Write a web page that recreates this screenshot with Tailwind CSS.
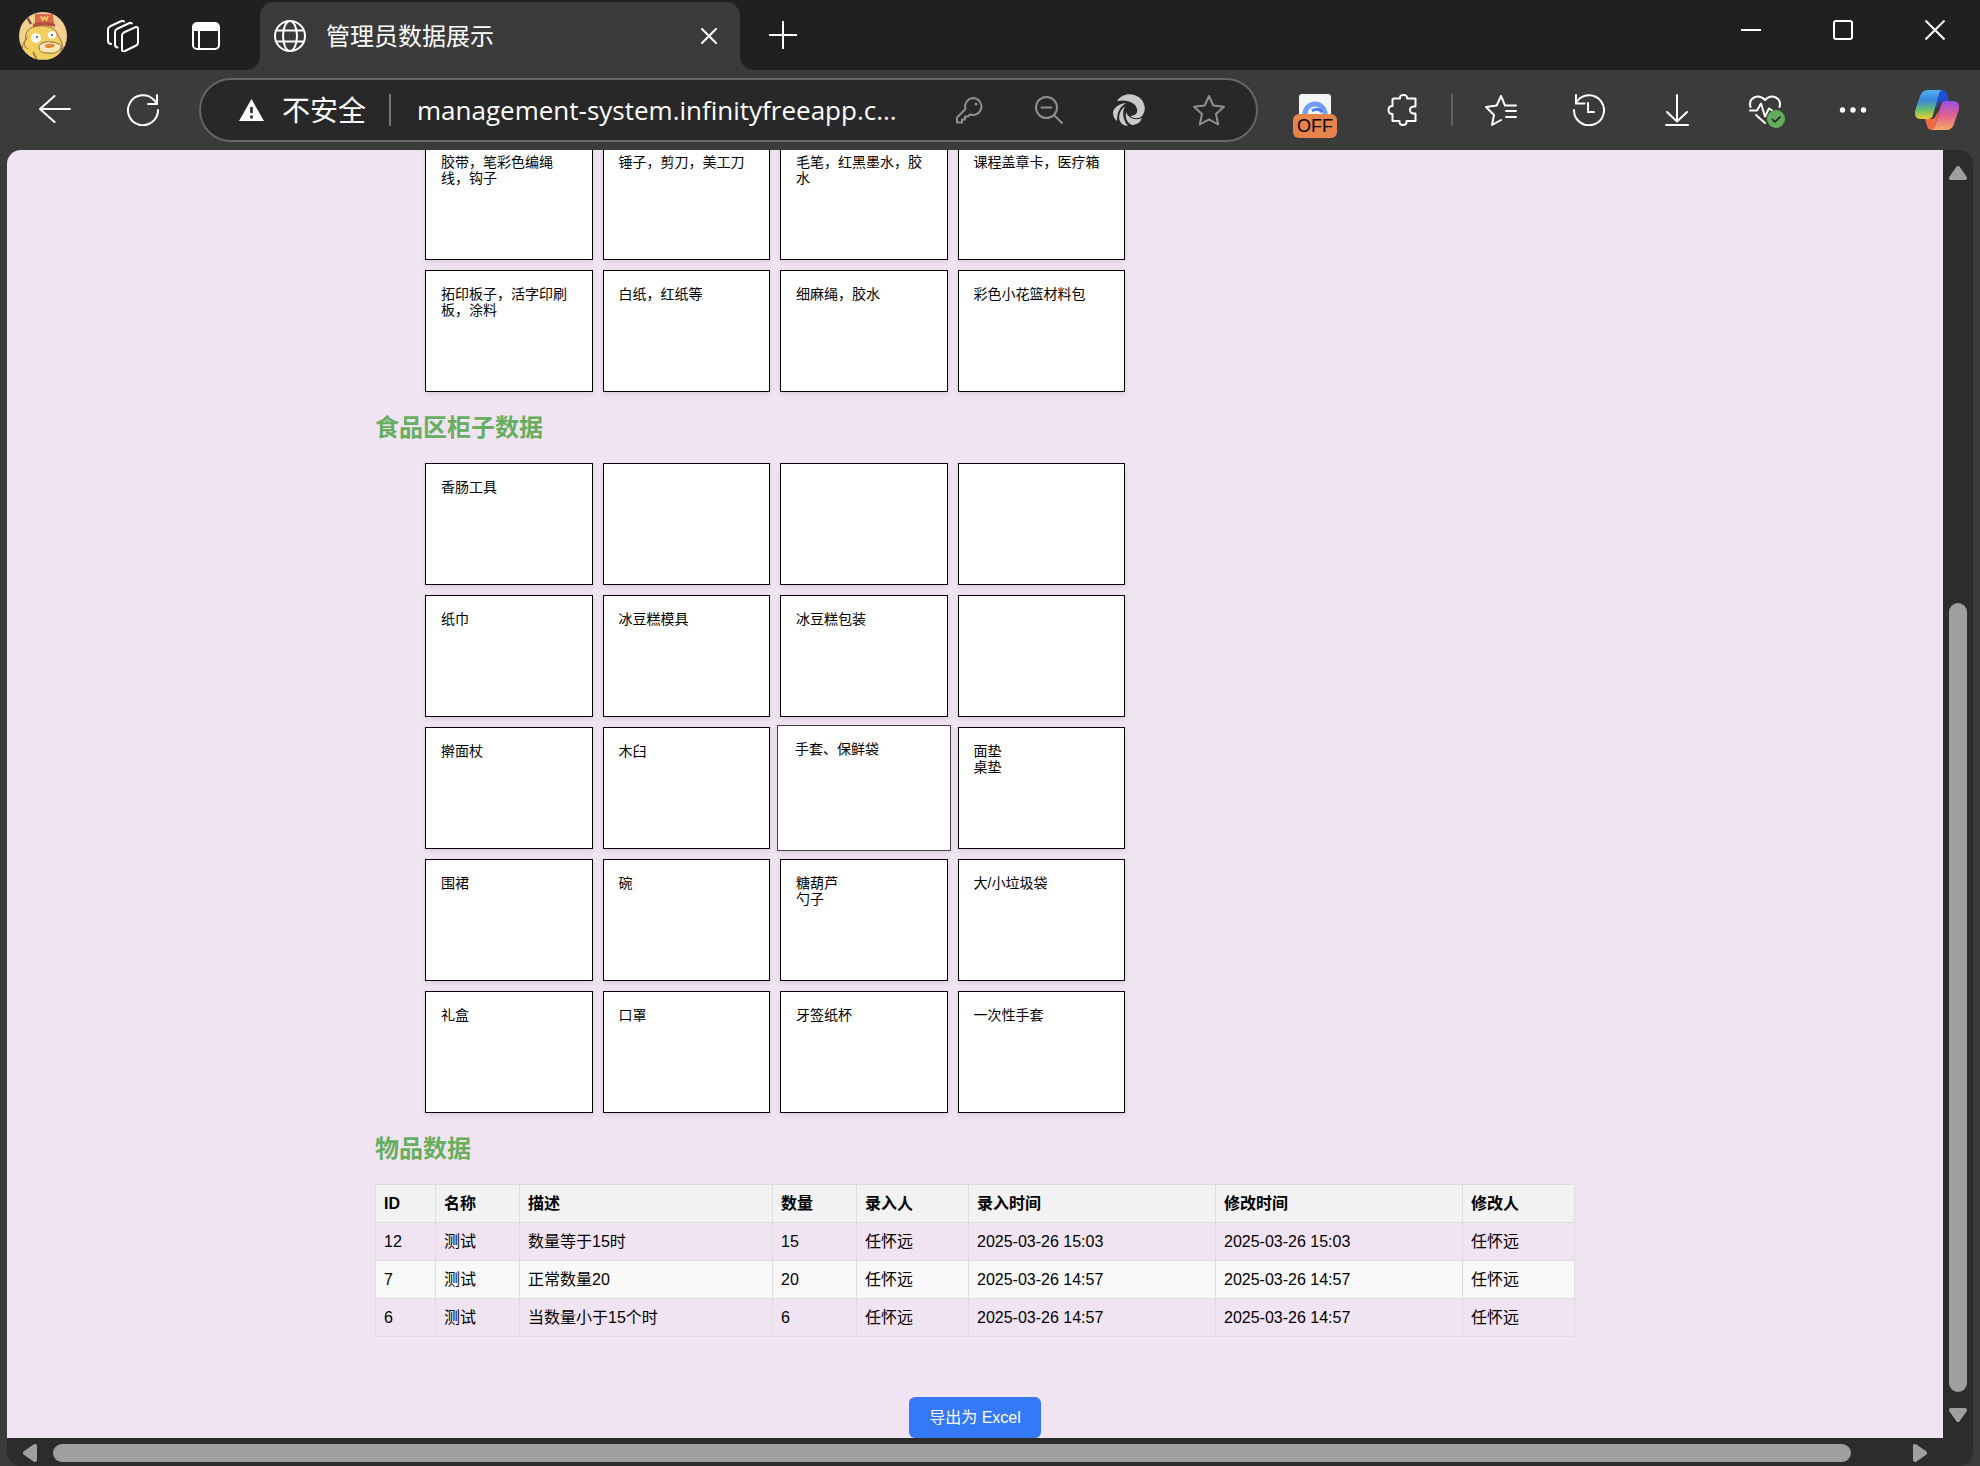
<!DOCTYPE html>
<html lang="zh-CN">
<head>
<meta charset="utf-8">
<meta name="viewport" content="width=device-width, initial-scale=1">
<title>管理员数据展示</title>
<script src="https://cdn.jsdelivr.net/npm/@tailwindcss/browser@4"></script>
</head>
<body class="flex h-screen flex-col overflow-hidden bg-[#3b3b3b] font-['Open_Sans','Noto_Sans_CJK_SC',sans-serif] text-white">

<!-- Title bar -->
<header class="flex h-[70px] shrink-0 items-start bg-[#202020]">
  <div class="flex h-[72px] items-center pl-[19px]">
    <button aria-label="个人资料" class="size-12 overflow-hidden rounded-full">
      <svg viewBox="0 0 48 48" class="size-12">
        <rect width="48" height="48" fill="#f3cf91"/>
        <path d="M6 48c-4-8-4-16 1-20-2-8 4-14 13-14 10-1 18 3 19 10 5 6 6 13 1 18l-6 6z" fill="#f2cf5e" stroke="#8a6d4a" stroke-width="1"/>
        <path d="M9 25c-5 4-5 10 0 12M41 37c4 0 6-3 6-7" fill="none" stroke="#8a6d4a" stroke-width="1"/>
        <path d="M16 2h18l1 10-19 1z" fill="#d9694a"/>
        <path d="M14 12c6-3 16-3 22 0v3c-7-2-15-2-22 0z" fill="#b94f3a"/>
        <path d="m22 4 1.500 4 2-3 2 3 1.500-4" fill="none" stroke="#f6d35b" stroke-width="1.500"/>
        <path d="m8 5 4 7" stroke="#7b5545" stroke-width="2.500"/>
        <circle cx="17" cy="26" r="5" fill="#fff"/><circle cx="33" cy="23" r="4" fill="#fff"/>
        <circle cx="18" cy="25" r="1" fill="#443"/><circle cx="33" cy="23" r="1" fill="#443"/>
        <path d="M20 36c-1-4 5-7 12-6 8 1 11 3 10 6-2 4-8 6-13 5-5 0-8-1-9-5z" fill="#fbe9b5" stroke="#8a6d4a" stroke-width="1"/>
        <path d="M26 33c4-2 8-1 10 0 0 3-8 4-10 2z" fill="#e08c3f"/>
        <path d="m14 40 4 8" stroke="#8a6d4a" stroke-width="1.500"/>
      </svg>
    </button>
    <button aria-label="工作区" class="ml-10">
      <svg viewBox="0 0 32 32" class="size-8" fill="none" stroke="#fff" stroke-width="2" stroke-linejoin="round" stroke-linecap="round">
        <path d="M15 15.500q0-2 1.800-3L28 7.300q3-1.200 3 1.700v13.500q0 2-1.800 3L18 31q-3 1.200-3-1.500z"/>
        <path d="M10.500 27.500Q8 27 8 24.500V12q0-2 1.800-3L22.500 3q1.500-.5 2.300.5"/>
        <path d="M4 24Q1 23.500 1 21V9.500q0-2 1.800-3L14.500 1q1.500-.5 2.500.5"/>
      </svg>
    </button>
    <button aria-label="标签页操作菜单" class="ml-[53px]">
      <svg viewBox="0 0 28 28" class="size-7">
        <rect x="1" y="1" width="26" height="26" rx="4" fill="none" stroke="#fff" stroke-width="2"/>
        <path d="M1 9V5q0-4 4-4h18q4 0 4 4v4z" fill="#fff"/><path d="M7 8v19" stroke="#fff" stroke-width="2"/>
      </svg>
    </button>
  </div>

  <div class="relative mt-0.5 ml-10 flex h-[68px] w-[480px] items-center rounded-t-[14px] bg-[#3b3b3b] pl-3.5">
    <svg viewBox="0 0 14 14" class="absolute bottom-0 -left-3.5 size-3.5"><path d="M14 0v14H0A14 14 0 0 0 14 0z" fill="#3b3b3b"/></svg>
    <svg viewBox="0 0 14 14" class="absolute -right-3.5 bottom-0 size-3.5"><path d="M0 0v14h14A14 14 0 0 1 0 0z" fill="#3b3b3b"/></svg>
    <svg viewBox="0 0 32 32" class="size-8" fill="none" stroke="#fff" stroke-width="2">
      <circle cx="16" cy="16" r="15"/><ellipse cx="16" cy="16" rx="7" ry="15"/><path d="M2.500 10.500h27M2.500 21.500h27"/>
    </svg>
    <span class="ml-5 text-2xl">管理员数据展示</span>
    <button aria-label="关闭标签页" class="mr-[23px] ml-auto">
      <svg viewBox="0 0 16 16" class="size-4" stroke="#fff" stroke-width="2" stroke-linecap="round"><path d="m1 1 14 14M15 1 1 15"/></svg>
    </button>
  </div>
  <button aria-label="新建标签页" class="mt-[21px] ml-[29px]">
    <svg viewBox="0 0 28 28" class="size-7" stroke="#fff" stroke-width="2"><path d="M14 0v28M0 14h28"/></svg>
  </button>
  <div class="ml-auto flex h-15 items-center">
    <button aria-label="最小化" class="flex w-23 justify-center"><svg viewBox="0 0 20 20" class="size-5" stroke="#fff" stroke-width="2"><path d="M0 10h20"/></svg></button>
    <button aria-label="最大化" class="flex w-23 justify-center"><svg viewBox="0 0 20 20" class="size-5" fill="none" stroke="#fff" stroke-width="2"><rect x="1" y="1" width="18" height="18" rx="2"/></svg></button>
    <button aria-label="关闭" class="flex w-[91px] justify-center"><svg viewBox="0 0 20 20" class="size-5" stroke="#fff" stroke-width="2"><path d="m0.500 0.500 19 19M19.500 0.500l-19 19"/></svg></button>
  </div>
</header>

<!-- Toolbar -->
<nav class="flex h-20 shrink-0 items-center pr-[3px] pl-[11px]">
  <button aria-label="返回" class="flex w-22 justify-center">
    <svg viewBox="0 0 32 32" class="size-8" fill="none" stroke="#fff" stroke-width="2" stroke-linecap="round" stroke-linejoin="round"><path d="M31 15H1M15.500 2 1 15l14.500 13"/></svg>
  </button>
  <button aria-label="刷新" class="flex w-22 justify-center">
    <svg viewBox="0 0 32 32" class="size-8" fill="none" stroke="#fff" stroke-width="2" stroke-linecap="round"><path d="M31 16A15 15 0 1 1 27 6l2 2.500M30 1v9h-9"/></svg>
  </button>

  <div class="ml-3 flex h-16 min-w-0 flex-1 items-center rounded-full border-2 border-[#666] bg-[#282828] pr-[7px] pl-[38px]">
    <svg viewBox="0 0 25 22" class="h-[22px] w-[25px] shrink-0"><path d="M12.500 0 25 22H0z" fill="#fff"/><path d="M12.500 8v6M12.500 16.500v3" stroke="#282828" stroke-width="2.600"/></svg>
    <label for="address" class="ml-[18px] shrink-0 text-[28px]">不安全</label>
    <span class="ml-[23px] h-8 w-0.5 shrink-0 bg-[#777]"></span>
    <input id="address" type="text" value="management-system.infinityfreeapp.c..." class="ml-[26px] min-w-0 flex-1 bg-transparent text-[26px] outline-none">
    <button aria-label="密码" class="flex w-20 shrink-0 justify-center">
      <svg viewBox="0 0 28 28" class="size-7" fill="none" stroke="#8f8f8f" stroke-width="2" stroke-linejoin="round"><path d="M18 2a8.500 8.500 0 1 1-3 16.500l-2 2h-3v3H7v3H2v-5L10.500 13A8.500 8.500 0 0 1 18 2z"/><circle cx="21" cy="8" r="1.500" fill="#8f8f8f" stroke="none"/></svg>
    </button>
    <button aria-label="缩小" class="flex w-20 shrink-0 justify-center">
      <svg viewBox="0 0 28 28" class="size-7" fill="none" stroke="#8f8f8f" stroke-width="2" stroke-linecap="round"><circle cx="11.500" cy="11.500" r="10.500"/><path d="M6.500 11.500h10M19 19l8 8"/></svg>
    </button>
    <button aria-label="网页助手" class="flex w-20 shrink-0 justify-center">
      <svg viewBox="0 0 32 32" class="size-8" fill="#c9c9c9">
        <path d="M4 7C9-1 20-2 27 4c6 6 6 13 2 18-3 3-8 3-12 0 5 0 8-3 7-7-1-6-9-10-20-8z"/>
        <path d="M13 9C5 10 1 14 0 18c0 4 1 7 4 9 0-7 2-14 9-18z" />
        <path d="M12 12c-6 5-8 13-3 18 2 1 4 2 6 2-4-5-7-12-3-20z"/>
        <path d="M13 18c2 6 9 9 16 6-2 5-6 7-10 7-5-2-7-7-6-13z"/>
      </svg>
    </button>
    <button aria-label="收藏此页" class="flex w-20 shrink-0 justify-center">
      <svg viewBox="0 0 32 32" class="size-8" fill="none" stroke="#8f8f8f" stroke-width="2" stroke-linejoin="round"><path d="m16 2 4.300 9.500L31 12.700l-8 7.300 2.200 10.500L16 25.300l-9.200 5.200L9 20l-8-7.300 10.700-1.200z"/></svg>
    </button>
  </div>

  <div class="ml-[13px] flex shrink-0 items-center">
    <button aria-label="扩展程序" class="relative flex w-22 justify-center">
      <svg viewBox="0 0 32 32" class="size-8"><rect width="32" height="32" rx="3" fill="#f4f5f8"/><path d="M6 20a10 10 0 0 1 20 0" fill="none" stroke="#6f9df5" stroke-width="5"/><path d="M13 17q6-4 10 1" fill="none" stroke="#4b7cf0" stroke-width="3"/></svg>
      <span class="absolute top-5 left-[22px] flex h-6 w-11 items-center justify-center rounded-md bg-[#e8834b] font-['Liberation_Sans',sans-serif] text-lg text-black">OFF</span>
    </button>
    <button aria-label="扩展" class="flex w-22 justify-center">
      <svg viewBox="0 0 32 32" class="size-8" fill="none" stroke="#fff" stroke-width="2" stroke-linejoin="round"><path d="M7 4.500h6q-.5-3.500 3.500-3.500t3.500 3.500h8.500v8q-5.500-.5-5.500 3.500t5.500 3.500v7.500h-9q.5 4-3.500 4t-3.500-4h-7v-7q-4 0-4-4t4-4V6q0-1.500 1.500-1.500z"/></svg>
    </button>
    <span class="mx-1 h-8 w-0.5 bg-[#606060]"></span>
    <button aria-label="收藏夹" class="flex w-22 justify-center">
      <svg viewBox="0 0 32 32" class="size-8" fill="none" stroke="#fff" stroke-width="2" stroke-linejoin="round" stroke-linecap="round"><path d="M31 11.500H20L16 2l-4.300 9.500L1 13l8 8-2 10 9-5M21 17h10M21 23h10"/></svg>
    </button>
    <button aria-label="历史记录" class="flex w-22 justify-center">
      <svg viewBox="0 0 32 32" class="size-8" fill="none" stroke="#fff" stroke-width="2" stroke-linecap="round"><path d="M1 16A15 15 0 1 0 3.500 8M3 1v8.500h8.500M15 9v9h6"/></svg>
    </button>
    <button aria-label="下载" class="flex w-22 justify-center">
      <svg viewBox="0 0 32 32" class="size-8" fill="none" stroke="#fff" stroke-width="2" stroke-linecap="round" stroke-linejoin="round"><path d="M16 1v26M6 18l10 9.500L26 18M5 31h22"/></svg>
    </button>
    <button aria-label="浏览器概要" class="relative flex w-22 justify-center">
      <svg viewBox="0 0 32 32" class="size-8" fill="none" stroke="#fff" stroke-width="2" stroke-linecap="round" stroke-linejoin="round"><path d="M1.500 13C-1 4 9-1 16 6c7-7 17-2 14.500 7M1 16.500h7l4-7 4 13 4-8 3 2M7 21l9 8"/></svg>
      <svg viewBox="0 0 18 18" class="absolute top-4 left-[46px] size-[18px]"><circle cx="9" cy="9" r="9" fill="#62ad59"/><path d="m5 9 3 3 5.500-5.500" fill="none" stroke="#303030" stroke-width="1.800"/></svg>
    </button>
    <button aria-label="设置及其他" class="flex w-22 justify-center">
      <svg viewBox="0 0 32 32" class="size-8" fill="#fff"><circle cx="5.500" cy="16" r="2.700"/><circle cx="16" cy="16" r="2.700"/><circle cx="26.500" cy="16" r="2.700"/></svg>
    </button>
    <button aria-label="Copilot" class="flex w-20 justify-center">
      <svg viewBox="0 0 44 40" class="h-10 w-11">
        <defs>
          <linearGradient id="cool" x1="0" y1="0" x2="0" y2="1"><stop offset="0" stop-color="#4fb3f4"/><stop offset=".35" stop-color="#3c86e0"/><stop offset=".7" stop-color="#6cc06c"/><stop offset="1" stop-color="#f3cc35"/></linearGradient>
          <linearGradient id="warm" x1="0" y1="0" x2="0" y2="1"><stop offset="0" stop-color="#9a50e8"/><stop offset=".5" stop-color="#e2608f"/><stop offset="1" stop-color="#f7a968"/></linearGradient>
        </defs>
        <path d="M25 0h2q4 0 5 4l2 7h-6q-4 0-5 4l-3 5z" fill="#1f4fd0"/>
        <path d="M19 40h-2q-4 0-5-4l-2-7h6q4 0 5-4l3-5z" fill="#ee6a45"/>
        <path d="M13 0h15q-3 0-4 4l-6 21q-1 4-5 4H6q-7 0-6-8L5 6q2-6 8-6z" fill="url(#cool)"/>
        <path d="M31 40H16q3 0 4-4l6-21q1-4 5-4h7q7 0 6 8l-5 15q-2 6-8 6z" fill="url(#warm)"/>
      </svg>
    </button>
  </div>
</nav>

<!-- Page viewport with its scrollbars -->
<div class="mr-[7px] ml-[7px] flex min-h-0 flex-1 flex-col overflow-hidden rounded-[14px] bg-[#2c2c2c]">
  <div class="flex min-h-0 flex-1">
    <main class="min-w-0 flex-1 overflow-hidden bg-[#f0e4f2] font-['Liberation_Sans','Noto_Sans_CJK_SC',sans-serif] text-black">
      <div class="mx-auto max-w-[1200px]">
        <section class="-mt-3 ml-[50px] grid w-[700px] grid-cols-4 gap-2.5 text-sm leading-4">
          <div class="h-[122px] border border-black bg-white p-[15px] shadow-[0_2px_5px_rgba(0,0,0,0.1)]">胶带，笔彩色编绳线，钩子</div>
          <div class="h-[122px] border border-black bg-white p-[15px] shadow-[0_2px_5px_rgba(0,0,0,0.1)]">锤子，剪刀，美工刀</div>
          <div class="h-[122px] border border-black bg-white p-[15px] shadow-[0_2px_5px_rgba(0,0,0,0.1)]">毛笔，红黑墨水，胶水</div>
          <div class="h-[122px] border border-black bg-white p-[15px] shadow-[0_2px_5px_rgba(0,0,0,0.1)]">课程盖章卡，医疗箱</div>
          <div class="h-[122px] border border-black bg-white p-[15px] shadow-[0_2px_5px_rgba(0,0,0,0.1)]">拓印板子，活字印刷板，涂料</div>
          <div class="h-[122px] border border-black bg-white p-[15px] shadow-[0_2px_5px_rgba(0,0,0,0.1)]">白纸，红纸等</div>
          <div class="h-[122px] border border-black bg-white p-[15px] shadow-[0_2px_5px_rgba(0,0,0,0.1)]">细麻绳，胶水</div>
          <div class="h-[122px] border border-black bg-white p-[15px] shadow-[0_2px_5px_rgba(0,0,0,0.1)]">彩色小花篮材料包</div>
        </section>

        <h2 class="my-5 text-2xl leading-[31px] font-bold text-[#67ae5e]">食品区柜子数据</h2>
        <section class="ml-[50px] grid w-[700px] auto-rows-[122px] grid-cols-4 gap-2.5 text-sm leading-4">
          <div class="border border-black bg-white p-[15px] shadow-[0_2px_5px_rgba(0,0,0,0.1)]">香肠工具</div>
          <div class="border border-black bg-white p-[15px] shadow-[0_2px_5px_rgba(0,0,0,0.1)]"></div>
          <div class="border border-black bg-white p-[15px] shadow-[0_2px_5px_rgba(0,0,0,0.1)]"></div>
          <div class="border border-black bg-white p-[15px] shadow-[0_2px_5px_rgba(0,0,0,0.1)]"></div>
          <div class="border border-black bg-white p-[15px] shadow-[0_2px_5px_rgba(0,0,0,0.1)]">纸巾</div>
          <div class="border border-black bg-white p-[15px] shadow-[0_2px_5px_rgba(0,0,0,0.1)]">冰豆糕模具</div>
          <div class="border border-black bg-white p-[15px] shadow-[0_2px_5px_rgba(0,0,0,0.1)]">冰豆糕包装</div>
          <div class="border border-black bg-white p-[15px] shadow-[0_2px_5px_rgba(0,0,0,0.1)]"></div>
          <div class="border border-black bg-white p-[15px] shadow-[0_2px_5px_rgba(0,0,0,0.1)]">擀面杖</div>
          <div class="border border-black bg-white p-[15px] shadow-[0_2px_5px_rgba(0,0,0,0.1)]">木臼</div>
          <div class="-mx-[3px] -my-0.5 border border-[#444] bg-white px-[17px] py-[15px] shadow-[0_2px_5px_rgba(0,0,0,0.1)]">手套、保鲜袋</div>
          <div class="border border-black bg-white p-[15px] shadow-[0_2px_5px_rgba(0,0,0,0.1)]">面垫<br>桌垫</div>
          <div class="border border-black bg-white p-[15px] shadow-[0_2px_5px_rgba(0,0,0,0.1)]">围裙</div>
          <div class="border border-black bg-white p-[15px] shadow-[0_2px_5px_rgba(0,0,0,0.1)]">碗</div>
          <div class="border border-black bg-white p-[15px] shadow-[0_2px_5px_rgba(0,0,0,0.1)]">糖葫芦<br>勺子</div>
          <div class="border border-black bg-white p-[15px] shadow-[0_2px_5px_rgba(0,0,0,0.1)]">大/小垃圾袋</div>
          <div class="border border-black bg-white p-[15px] shadow-[0_2px_5px_rgba(0,0,0,0.1)]">礼盒</div>
          <div class="border border-black bg-white p-[15px] shadow-[0_2px_5px_rgba(0,0,0,0.1)]">口罩</div>
          <div class="border border-black bg-white p-[15px] shadow-[0_2px_5px_rgba(0,0,0,0.1)]">牙签纸杯</div>
          <div class="border border-black bg-white p-[15px] shadow-[0_2px_5px_rgba(0,0,0,0.1)]">一次性手套</div>
        </section>

        <h2 class="my-5 text-2xl leading-[31px] font-bold text-[#67ae5e]">物品数据</h2>
        <table class="w-full table-fixed border-collapse text-left text-base leading-[21px] [&_td]:h-[38px] [&_td]:border [&_td]:border-[#ddd] [&_td]:px-2 [&_td]:py-0 [&_th]:h-[38px] [&_th]:border [&_th]:border-[#ddd] [&_th]:px-2 [&_th]:py-0">
          <colgroup><col class="w-[60px]"><col class="w-[84px]"><col><col class="w-[84px]"><col class="w-[112px]"><col class="w-[247px]"><col class="w-[247px]"><col class="w-[112px]"></colgroup>
          <thead class="bg-[#f2f2f2]">
            <tr><th>ID</th><th>名称</th><th>描述</th><th>数量</th><th>录入人</th><th>录入时间</th><th>修改时间</th><th>修改人</th></tr>
          </thead>
          <tbody>
            <tr><td>12</td><td>测试</td><td>数量等于15时</td><td>15</td><td>任怀远</td><td>2025-03-26 15:03</td><td>2025-03-26 15:03</td><td>任怀远</td></tr>
            <tr class="bg-[#f9f9f9]"><td>7</td><td>测试</td><td>正常数量20</td><td>20</td><td>任怀远</td><td>2025-03-26 14:57</td><td>2025-03-26 14:57</td><td>任怀远</td></tr>
            <tr><td>6</td><td>测试</td><td>当数量小于15个时</td><td>6</td><td>任怀远</td><td>2025-03-26 14:57</td><td>2025-03-26 14:57</td><td>任怀远</td></tr>
          </tbody>
        </table>
        <div class="mt-15 flex justify-center">
          <button class="rounded-md bg-[#3579f6] px-5 py-2.5 text-base leading-[21px] text-white">导出为 Excel</button>
        </div>
      </div>
    </main>
    <div class="flex w-[30px] shrink-0 flex-col items-center pt-4 pb-4">
      <svg viewBox="0 0 18 14" class="h-3.5 w-[18px] shrink-0"><path d="M9 2 2 12h14z" fill="#9f9f9f" stroke="#9f9f9f" stroke-width="4" stroke-linejoin="round"/></svg>
      <div class="flex w-[18px] flex-1 flex-col justify-end py-4"><div class="h-[66%] rounded-full bg-[#9f9f9f]"></div></div>
      <svg viewBox="0 0 18 14" class="h-3.5 w-[18px] shrink-0"><path d="M9 12 2 2h14z" fill="#9f9f9f" stroke="#9f9f9f" stroke-width="4" stroke-linejoin="round"/></svg>
    </div>
  </div>
  <div class="flex h-7 shrink-0 items-center pt-0.5 pr-[46px] pl-4">
    <svg viewBox="0 0 14 18" class="h-[18px] w-3.5 shrink-0"><path d="M2 9 12 2v14z" fill="#9f9f9f" stroke="#9f9f9f" stroke-width="4" stroke-linejoin="round"/></svg>
    <div class="flex h-[18px] flex-1 px-4"><div class="w-[97.500%] rounded-full bg-[#9f9f9f]"></div></div>
    <svg viewBox="0 0 14 18" class="h-[18px] w-3.5 shrink-0"><path d="M12 9 2 2v14z" fill="#9f9f9f" stroke="#9f9f9f" stroke-width="4" stroke-linejoin="round"/></svg>
  </div>
</div>
</body>
</html>
